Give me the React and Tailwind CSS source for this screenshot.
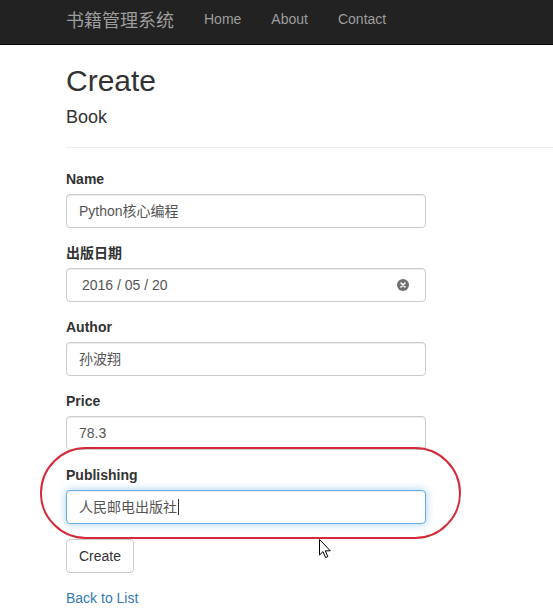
import React from "react";

const font = { fontFamily: '"Liberation Sans", Arial, "Noto Sans CJK SC", sans-serif' };

function Field({ label, value, focused, date }) {
  return (
    <div className="mb-[15px]">
      <label className="block mb-[5px] text-[14px] leading-[20px] font-bold text-[#333]">
        {label}
      </label>
      <div
        className={`w-[360px] h-[34px] rounded-[4px] border bg-white flex items-center text-[14px] text-[#555] ${
          focused
            ? "border-[#66afe9] shadow-[inset_0_1px_1px_rgba(0,0,0,0.075),0_0_8px_rgba(102,175,233,0.6)]"
            : "border-[#ccc] shadow-[inset_0_1px_1px_rgba(0,0,0,0.075)]"
        } ${date ? "pl-[15px] pr-[16px] justify-between" : "px-[12px]"}`}
      >
        <span className="flex items-center">
          {value}
          {focused && <span className="inline-block w-px h-[16px] bg-[#333] ml-[1px]"></span>}
        </span>
        {date && (
          <svg width="12" height="12" viewBox="0 0 12 12">
            <circle cx="6" cy="6" r="6" fill="#6f6f6f" />
            <path d="M4 4 L8 8 M8 4 L4 8" stroke="#fff" strokeWidth="1.6" strokeLinecap="round" />
          </svg>
        )}
      </div>
    </div>
  );
}

export default function App() {
  return (
    <div className="relative min-h-[613px] bg-white text-[#333] overflow-hidden" style={font}>
      {/* Navbar */}
      <nav className="h-[45px] bg-[#222] border-b border-[#080808] flex items-center pl-[66px]">
        <span
          className="text-[18px] text-[#9d9d9d] mr-[30px] -mt-[5px]"
          style={{ fontFamily: '"Noto Sans CJK SC", sans-serif' }}
        >
          书籍管理系统
        </span>
        <div className="flex items-center gap-[30px] text-[14px] text-[#9d9d9d] -mt-[5px]">
          <span>Home</span>
          <span>About</span>
          <span>Contact</span>
        </div>
      </nav>

      <main className="pl-[66px]">
        <h2 className="text-[30px] leading-[33px] mt-[19px] mb-[10px] font-normal">Create</h2>
        <h4 className="text-[18px] leading-[20px] mt-[5px] mb-[10px] font-normal">Book</h4>
        <hr className="mt-[20px] mb-[21px] border-0 border-t border-[#eee]" />

        <Field label="Name" value="Python核心编程" />
        <Field label="出版日期" value="2016 / 05 / 20" date />
        <Field label="Author" value="孙波翔" />
        <Field label="Price" value="78.3" />
        <Field label="Publishing" value="人民邮电出版社" focused />

        <button className="h-[34px] px-[12px] rounded-[4px] border border-[#ccc] bg-white text-[14px] text-[#333]">
          Create
        </button>

        <div className="mt-[15px] text-[14px] leading-[20px] text-[#337ab7]">Back to List</div>
      </main>

      {/* red annotation */}
      <div className="absolute left-[40px] top-[447px] w-[421px] h-[92px] border-2 border-[#d42a3a] rounded-[46px] pointer-events-none"></div>

      {/* mouse cursor */}
      <svg className="absolute left-[319px] top-[539px]" width="13" height="20" viewBox="0 0 13 20">
        <path
          d="M0.5 0.5 L0.5 16 L4 12.6 L6.6 18.6 L8.8 17.6 L6.3 11.8 L11.3 11.8 Z"
          fill="#fff"
          stroke="#000"
          strokeWidth="1"
          strokeLinejoin="round"
        />
      </svg>
    </div>
  );
}
